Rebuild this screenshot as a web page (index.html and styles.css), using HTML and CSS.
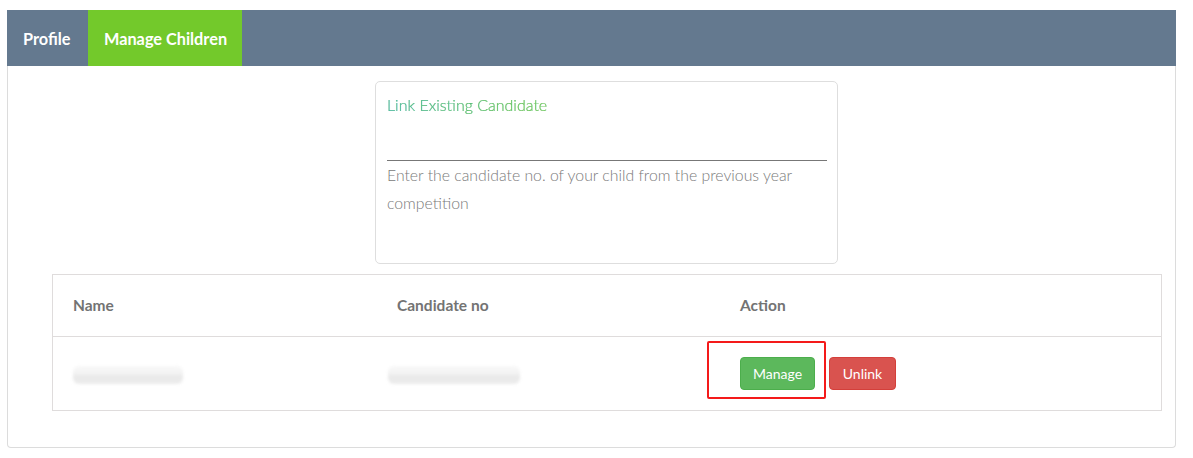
FILE: index.html
```html
<!DOCTYPE html>
<html>
<head>
<meta charset="utf-8">
<link rel="stylesheet" href="styles.css">
</head>
<body>
<div class="panel">
  <nav class="tabs">
    <a class="tab">Profile</a>
    <a class="tab active">Manage Children</a>
  </nav>
  <div class="content">
    <div class="card">
      <div class="card-title">Link Existing Candidate</div>
      <div class="field"></div>
      <p class="help">Enter the candidate no. of your child from the previous year competition</p>
    </div>
    <div class="table">
      <div class="row head">
        <div class="cell">Name</div>
        <div class="cell">Candidate no</div>
        <div class="cell">Action</div>
      </div>
      <div class="row body">
        <div class="cell"><span class="blur blur-name"></span></div>
        <div class="cell"><span class="blur blur-no"></span></div>
        <div class="cell actions">
          <span class="btn-wrap"><button class="btn btn-green">Manage</button><span class="highlight"></span></span>
          <button class="btn btn-red">Unlink</button>
        </div>
      </div>
    </div>
  </div>
</div>
</body>
</html>
```
FILE: styles.css
```css
* { box-sizing: border-box; }
html, body { margin: 0; background: #fff; }
body {
  padding: 10px 17px 0 7px;
  font-family: "Lato", "Open Sans", sans-serif;
  color: #777;
}
.panel {
  width: 1169px;
  height: 438px;
  border: 1px solid #dcdcdc;
  border-top: none;
  border-radius: 0 0 4px 4px;
}
.tabs {
  display: flex;
  height: 56px;
  background: #64798f;
  margin: 0 -1px;
}
.tab {
  display: flex;
  align-items: center;
  padding: 0 16px;
  color: #fff;
  font-weight: 700;
  font-size: 16.3px;
  white-space: nowrap;
  flex: none;
}
.tab:first-child { width: 81px; }
.tab.active { background: #73c92b; width: 154px; }
.content {
  padding: 15px 13px 0 44px;
}
.card {
  margin-left: 323px;
  width: 463px;
  height: 183px;
  border: 1px solid #dedede;
  border-radius: 5px;
  padding: 11px 10px 0 11px;
}
.card-title {
  font-size: 16px;
  font-weight: 300;
  line-height: 24px;
  background: linear-gradient(90deg, #3fb3a8 0%, #5fc25c 30%, #7cc93f 70%, #86cc3a 100%);
  -webkit-background-clip: text;
  background-clip: text;
  color: transparent;
  -webkit-text-stroke: 0.2px rgba(100, 190, 70, 0.6);
}
.field {
  height: 44px;
  border-bottom: 1px solid #777;
}
.help {
  margin: 0;
  font-size: 15.8px;
  font-weight: 300;
  line-height: 28px;
  color: #7a7a7a;
  padding-right: 30px;
}
.table {
  margin-top: 10px;
  width: 1110px;
  border: 1px solid #dfdcdc;
}
.row {
  display: grid;
  grid-template-columns: 324px 343px 1fr;
  align-items: center;
}
.row.head {
  height: 62px;
  border-bottom: 1px solid #dfdcdc;
  font-weight: 700;
  font-size: 15.5px;
  color: #737373;
  padding-bottom: 2px;
}
.row.body { height: 73px; }
.cell { padding-left: 20px; }
.blur {
  display: inline-block;
  height: 18px;
  border-radius: 6px;
  background: linear-gradient(180deg, #f8f8f8 0%, #f3f3f3 40%, #e9e9e9 60%, #ececec 100%);
  filter: blur(1.5px);
  vertical-align: middle;
}
.blur-name { width: 110px; }
.cell:nth-child(2) .blur { margin-left: -9px; }
.blur-no { width: 132px; }
.actions { display: flex; align-items: center; gap: 14px; }
.btn-wrap { position: relative; display: inline-block; }
.btn {
  font-family: "Lato", "Open Sans", sans-serif;
  font-size: 14px;
  color: #fff;
  height: 33px;
  border-radius: 4px;
  border: 1px solid transparent;
  padding: 0 12px;
  line-height: 31px;
}
.btn-green { background: #5cb85c; border-color: #4cae4c; width: 75px; }
.btn-red { background: #d9534f; border-color: #d43f3a; width: 67px; }
.highlight {
  position: absolute;
  left: -33px;
  top: -16px;
  width: 119px;
  height: 58px;
  border: 2px solid #f41a1a;
  border-radius: 2px;
}
```
